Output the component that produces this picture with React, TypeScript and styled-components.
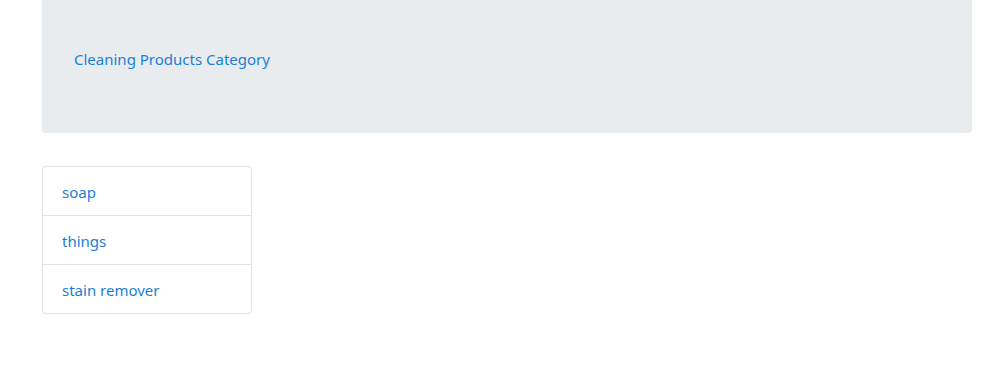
import React from 'react';
import styled, { createGlobalStyle } from 'styled-components';

const GlobalStyle = createGlobalStyle`
    body {
        margin: 0;
        background: #fff;
        font-family: "Noto Sans", "Open Sans", sans-serif;
        font-size: 15px;
        line-height: 1.5;
        color: #212529;
    }
`;

const Page = styled.div`
    padding: 0 13px 0 42px;
`;

const Jumbotron = styled.div`
    background: #e9ecef;
    border-radius: 0 0 4px 4px;
    padding: 47px 32px 62px;
    line-height: 24px;
    margin-bottom: 33px;
`;

const Link = styled.a`
    color: #1a7fd6;
    text-decoration: none;
    font-size: 15px;
`;

const ListGroup = styled.ul`
    list-style: none;
    margin: 0;
    padding: 0;
    width: 210px;
    box-sizing: border-box;
    border: 1px solid #dfe2e5;
    border-radius: 4px;
`;

const ListItem = styled.li`
    padding: 13px 19px 11px;
    line-height: 24px;
    border-top: 1px solid #dfe2e5;

    &:first-child {
        border-top: none;
    }
`;

const items = ['soap', 'things', 'stain remover'];

export default function App() {
    return (
        <>
            <GlobalStyle />
            <Page>
                <Jumbotron>
                    <Link href="#">Cleaning Products Category</Link>
                </Jumbotron>
                <ListGroup>
                    {items.map(item => (
                        <ListItem key={item}>
                            <Link href="#">{item}</Link>
                        </ListItem>
                    ))}
                </ListGroup>
            </Page>
        </>
    );
}
